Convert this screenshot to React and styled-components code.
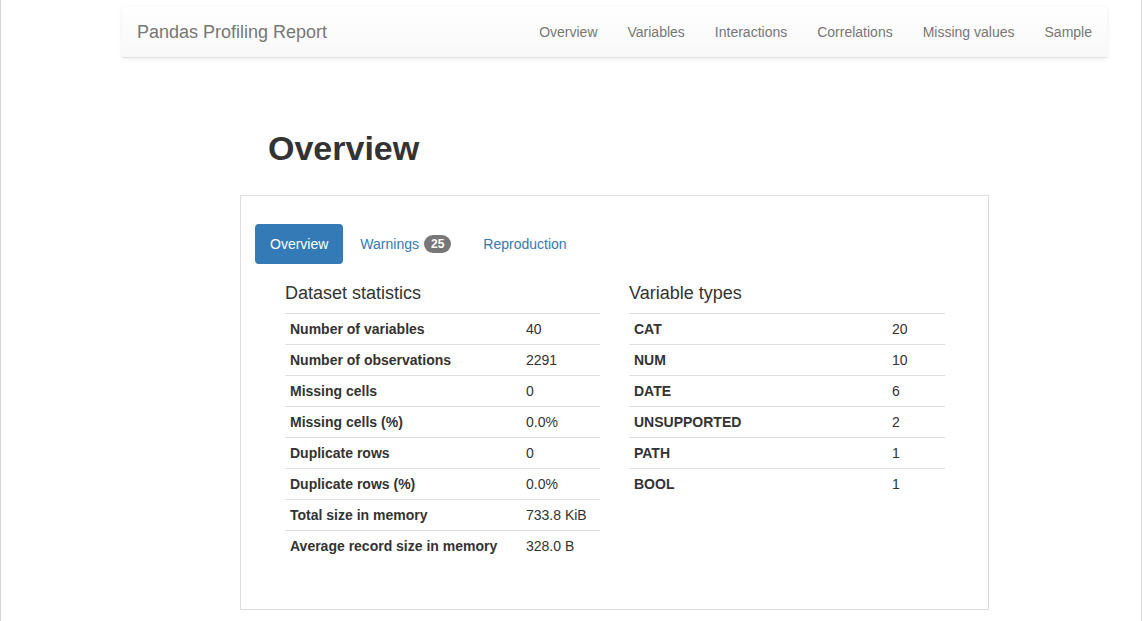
import React from 'react'
import styled, { createGlobalStyle } from 'styled-components'

const GlobalStyle = createGlobalStyle`
  html, body {
    margin: 0;
    padding: 0;
    background: #fff;
  }
  body {
    font-family: "Liberation Sans", Arial, Helvetica, sans-serif;
    font-size: 14px;
    line-height: 1.42857;
    color: #333;
  }
  * { box-sizing: border-box; }
`

const Frame = styled.div`
  width: 1142px;
  min-height: 100vh;
  border-left: 1px solid #d6d6d6;
  border-right: 1px solid #d6d6d6;
  padding-top: 7px;
`

const Navbar = styled.nav`
  margin-left: 121px;
  width: 985px;
  height: 51px;
  display: flex;
  align-items: center;
  justify-content: space-between;
  background-image: linear-gradient(to bottom, #fff 0, #f8f8f8 100%);
  border-bottom: 1px solid #e2e2e2;
  box-shadow: 0 1px 5px rgba(0, 0, 0, 0.07);
`

const Brand = styled.a`
  padding: 0 15px;
  font-size: 18px;
  line-height: 20px;
  color: #777;
  text-decoration: none;
`

const NavLinks = styled.ul`
  display: flex;
  list-style: none;
  margin: 0;
  padding: 0;
`

const NavLink = styled.a`
  display: block;
  padding: 15px 15px;
  line-height: 20px;
  color: #777;
  text-decoration: none;
`

const Main = styled.div`
  margin-left: 121px;
  width: 985px;
`

const Container = styled.div`
  width: 749px;
  margin: 0 auto;
`

const PageTitle = styled.h1`
  margin: 72px 0 28px 28px;
  font-size: 34px;
  line-height: 1.1;
  font-weight: 700;
  color: #333;
`

const Panel = styled.div`
  border: 1px solid #ddd;
  padding: 28px 15px 28px 14px;
`

const Pills = styled.ul`
  display: flex;
  gap: 2px;
  list-style: none;
  margin: 0;
  padding: 0;
`

const Pill = styled.a`
  display: flex;
  align-items: center;
  gap: 5px;
  padding: 10px 15px;
  line-height: 20px;
  border-radius: 4px;
  text-decoration: none;
  color: ${p => (p.$active ? '#fff' : '#337ab7')};
  background: ${p => (p.$active ? '#337ab7' : 'transparent')};
`

const Badge = styled.span`
  display: inline-block;
  padding: 3px 7px;
  font-size: 12px;
  font-weight: 700;
  line-height: 1;
  color: #fff;
  background: #777;
  border-radius: 10px;
`

const Columns = styled.div`
  display: grid;
  grid-template-columns: 315px 316px;
  column-gap: 29px;
  padding: 0 0 0 30px;
  margin-top: 20px;
`

const SectionTitle = styled.h4`
  margin: 0 0 9px;
  font-size: 18px;
  line-height: 1.1;
  font-weight: 500;
  color: #333;
`

const StatTable = styled.table`
  width: 100%;
  table-layout: fixed;
  border-collapse: collapse;
  margin-bottom: 20px;

  td {
    padding: 5px;
    line-height: 20px;
    border-top: 1px solid #ddd;
    vertical-align: top;
    white-space: nowrap;
  }
  td:first-child {
    width: ${p => p.$labelWidth}px;
    font-weight: 700;
  }
`

const stats = [
  ['Number of variables', '40'],
  ['Number of observations', '2291'],
  ['Missing cells', '0'],
  ['Missing cells (%)', '0.0%'],
  ['Duplicate rows', '0'],
  ['Duplicate rows (%)', '0.0%'],
  ['Total size in memory', '733.8 KiB'],
  ['Average record size in memory', '328.0 B'],
]

const types = [
  ['CAT', '20'],
  ['NUM', '10'],
  ['DATE', '6'],
  ['UNSUPPORTED', '2'],
  ['PATH', '1'],
  ['BOOL', '1'],
]

const navItems = ['Overview', 'Variables', 'Interactions', 'Correlations', 'Missing values', 'Sample']

const Section = ({ title, rows, labelWidth }) => (
  <div>
    <SectionTitle>{title}</SectionTitle>
    <StatTable $labelWidth={labelWidth}>
      <tbody>
        {rows.map(([label, value]) => (
          <tr key={label}>
            <td>{label}</td>
            <td>{value}</td>
          </tr>
        ))}
      </tbody>
    </StatTable>
  </div>
)

const App = () => {
  return (
    <Frame>
      <GlobalStyle />
      <Navbar>
        <Brand href="#">Pandas Profiling Report</Brand>
        <NavLinks>
          {navItems.map(item => (
            <li key={item}>
              <NavLink href="#">{item}</NavLink>
            </li>
          ))}
        </NavLinks>
      </Navbar>
      <Main>
        <Container>
          <PageTitle>Overview</PageTitle>
          <Panel>
            <Pills>
              <li><Pill $active href="#">Overview</Pill></li>
              <li><Pill href="#">Warnings <Badge>25</Badge></Pill></li>
              <li><Pill href="#">Reproduction</Pill></li>
            </Pills>
            <Columns>
              <Section title="Dataset statistics" rows={stats} labelWidth={236} />
              <Section title="Variable types" rows={types} labelWidth={258} />
            </Columns>
          </Panel>
        </Container>
      </Main>
    </Frame>
  )
}

export default App
